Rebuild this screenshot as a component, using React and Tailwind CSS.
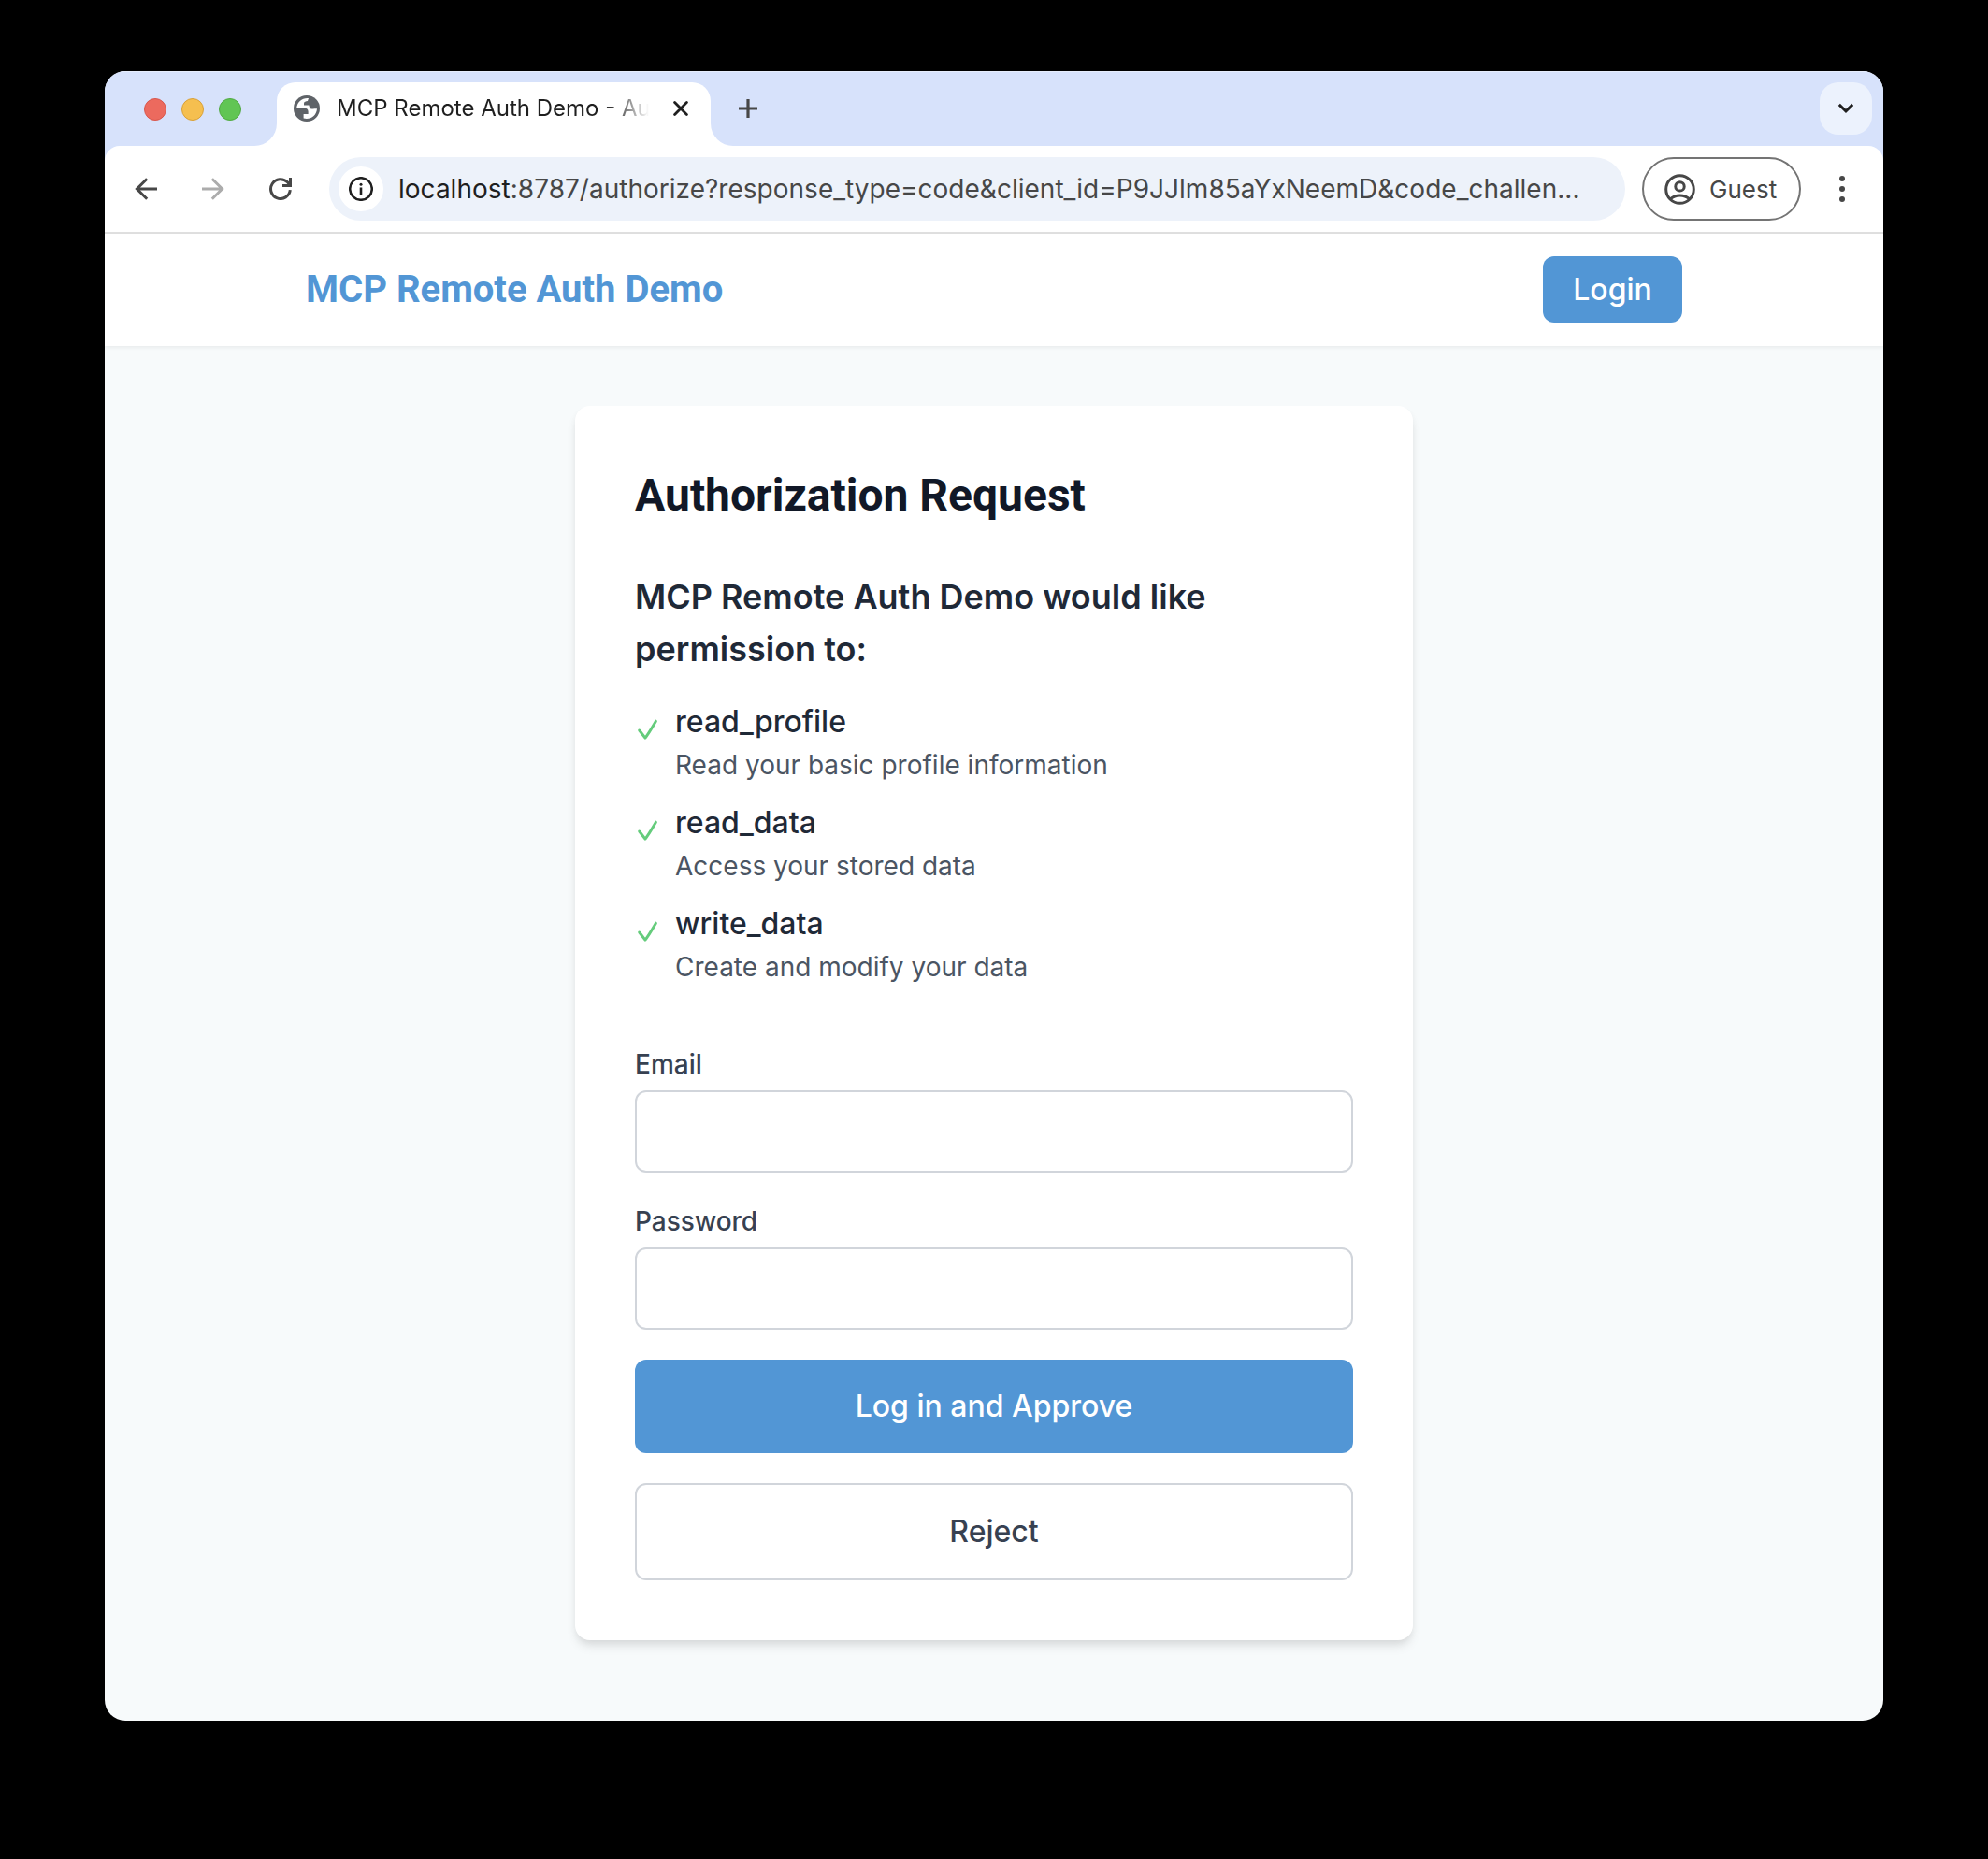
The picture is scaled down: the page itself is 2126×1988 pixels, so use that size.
import React from "react";

const permissions = [
  { name: "read_profile", description: "Read your basic profile information" },
  { name: "read_data", description: "Access your stored data" },
  { name: "write_data", description: "Create and modify your data" },
];

function GlobeIcon() {
  return (
    <svg className="size-7 shrink-0" viewBox="0 0 28 28">
      <circle cx="14" cy="14" r="14" fill="#5f6368" />
      <path
        d="M16 3C9 2.4 3.8 7 3.2 13.6H11C14 13.6 15.6 15 15.6 17.6V20H10.6V24.6C18 26.6 24.6 21.6 25 14.3H22C18.4 15.4 16.8 13.4 16.4 10.4H11V8.4C11.2 6.4 13 6.6 15 6Z"
        fill="#fff"
      />
    </svg>
  );
}

function CheckIcon() {
  return (
    <svg
      className="size-6 shrink-0"
      viewBox="0 0 24 24"
      fill="none"
      stroke="#65cc7c"
      strokeWidth="3"
      strokeLinecap="round"
      strokeLinejoin="round"
    >
      <path d="M2.7 13L9 21.1C13.2 15.7 16.2 10.2 20.4 3.2" />
    </svg>
  );
}

function TabStrip() {
  return (
    <div className="flex h-20 items-end bg-[#d7e2fb] shadow-[inset_0_1px_0_#e6edfc]">
      <div className="flex h-20 w-40 items-center gap-4 pt-0.5 pl-[42px]">
        <span className="size-6 rounded-full border border-[#d8574c] bg-[#ec6a5e]" />
        <span className="size-6 rounded-full border border-[#d8a13a] bg-[#f5bf4f]" />
        <span className="size-6 rounded-full border border-[#52a943] bg-[#61c554]" />
      </div>
      <div className="size-6 bg-white">
        <div className="size-6 rounded-br-[24px] bg-[#d7e2fb]" />
      </div>
      <div className="flex h-[68px] w-[464px] items-center rounded-t-[20px] bg-white pb-3 pl-[18px]">
        <GlobeIcon />
        <span className="ml-[18px] w-[350px] [mask-image:linear-gradient(to_right,#000_292px,transparent_334px)] text-2xl whitespace-nowrap text-[#1f1f1f]">
          MCP Remote Auth Demo - Aut
        </span>
        <svg
          className="ml-[10px] size-4 shrink-0"
          viewBox="0 0 16 16"
          stroke="#1f1f1f"
          strokeWidth="2.8"
          strokeLinecap="round"
        >
          <path d="M1.6 1.6L14.4 14.4M14.4 1.6L1.6 14.4" />
        </svg>
      </div>
      <div className="size-6 bg-white">
        <div className="size-6 rounded-bl-[24px] bg-[#d7e2fb]" />
      </div>
      <div className="flex h-20 flex-1 items-center justify-between pr-3 pl-1.5">
        <svg className="size-5" viewBox="0 0 20 20" stroke="#474747" strokeWidth="3.2">
          <path d="M0 10H20M10 0V20" />
        </svg>
        <div className="flex size-14 items-center justify-center rounded-[20px] bg-[#ecf2fd]">
          <svg className="size-5" viewBox="0 0 20 20" fill="none" stroke="#1f1f1f" strokeWidth="3">
            <path d="M2.8 5.8L10 12.8L17.2 5.8" />
          </svg>
        </div>
      </div>
    </div>
  );
}

function Toolbar() {
  return (
    <div className="bg-[#d7e2fb]">
      <div className="flex h-[94px] items-center rounded-t-[16px] border-b-2 border-[#dfdfdf] bg-white">
        <svg className="ml-8 size-6" viewBox="0 0 24 24" fill="none" stroke="#474747" strokeWidth="3">
          <path d="M24 12H2.5M13.2 1.2L2.4 12L13.2 22.8" />
        </svg>
        <svg className="ml-12 size-6" viewBox="0 0 24 24" fill="none" stroke="#acacac" strokeWidth="3">
          <path d="M0 12H21.5M10.8 1.2L21.6 12L10.8 22.8" />
        </svg>
        <svg className="ml-12 size-6" viewBox="0 0 24 24" fill="none" stroke="#474747" strokeWidth="3">
          <path d="M22.3 13.2A10.4 10.4 0 1 1 19.4 4.8L22.6 8.4M22.5 0V8.5H14" />
        </svg>
        <div className="ml-10 flex h-[68px] w-[1386px] items-center rounded-full bg-[#edf2fa] pl-2.5">
          <div className="flex size-12 items-center justify-center rounded-full bg-white">
            <svg className="size-[26px]" viewBox="0 0 26 26" fill="none" stroke="#1f1f1f">
              <circle cx="13" cy="13" r="11.8" strokeWidth="2.5" />
              <path d="M13 11.4V19.2" strokeWidth="2.6" />
              <circle cx="13" cy="8.2" r="1.5" fill="#1f1f1f" stroke="none" />
            </svg>
          </div>
          <span className="ml-4 text-[28px] leading-10 tracking-[0.015px] whitespace-nowrap text-[#474747]">
            <span className="text-[#1f1f1f]">localhost</span>
            :8787/authorize?response_type=code&amp;client_id=P9JJlm85aYxNeemD&amp;code_challen...
          </span>
        </div>
        <div className="ml-[18px] flex h-[68px] w-[170px] items-center rounded-full border-2 border-[#747474] pl-[21.5px] text-[#474747]">
          <svg className="size-[33px]" viewBox="0 0 33 33" fill="none" stroke="currentColor" strokeWidth="3">
            <circle cx="16.5" cy="16.5" r="14.8" />
            <circle cx="16.5" cy="13.4" r="4.7" />
            <path d="M6.2 26.8C12 21.6 21 21.6 26.8 26.8" />
          </svg>
          <span className="ml-[15.5px] text-[26px]">Guest</span>
        </div>
        <svg className="ml-[41px] h-7 w-1.5" viewBox="0 0 6 28" fill="#474747">
          <circle cx="3" cy="3" r="3" />
          <circle cx="3" cy="14" r="3" />
          <circle cx="3" cy="25" r="3" />
        </svg>
      </div>
    </div>
  );
}

function Field({ label, type }) {
  return (
    <label className="block">
      <span className="mb-2 block text-[28px] leading-10 font-medium text-[#374151]">{label}</span>
      <input type={type} className="block h-[88px] w-full rounded-xl border-2 border-[#d1d5db] px-6" />
    </label>
  );
}

export default function App() {
  return (
    <div className="h-[1988px] bg-black px-28 pt-[76px] font-['Inter',sans-serif]">
      <div className="flex h-[1764px] w-[1902px] flex-col overflow-hidden rounded-[22px] bg-[#f7fafb]">
        <TabStrip />
        <Toolbar />
        <header className="relative h-[120px] bg-white px-[215px] pt-6 shadow-[0_2px_4px_rgba(0,0,0,0.06)]">
          <div className="flex w-[1472px] items-start justify-between">
            <span className="mt-2 font-['Roboto'] text-[40px] leading-14 font-bold text-[#5296d5]">
              MCP Remote Auth Demo
            </span>
            <button className="h-[71px] w-[149px] rounded-xl bg-[#5296d5] text-[32px] font-medium text-white">
              Login
            </button>
          </div>
        </header>
        <main className="flex justify-center pt-16">
          <section className="h-[1320px] w-[896px] rounded-2xl bg-white p-16 shadow-[0_8px_12px_-2px_rgba(0,0,0,0.1),0_4px_8px_-2px_rgba(0,0,0,0.06)]">
            <h1 className="mb-12 font-['Roboto'] text-5xl leading-[64px] font-bold text-[#111827]">
              Authorization Request
            </h1>
            <h2 className="mb-[26px] text-4xl leading-14 font-semibold text-[#1f2937]">
              MCP Remote Auth Demo would like permission to:
            </h2>
            <ul className="mb-[62px] flex flex-col gap-4">
              {permissions.map((item) => (
                <li key={item.name} className="flex h-[92px] items-start">
                  <span className="mt-[19.5px] mr-[17px] ml-0.5">
                    <CheckIcon />
                  </span>
                  <div>
                    <p className="text-[32px] leading-[48px] font-medium text-[#1f2937]">{item.name}</p>
                    <p className="mt-0.5 text-[28px] leading-10 text-[#4b5563]">{item.description}</p>
                  </div>
                </li>
              ))}
            </ul>
            <form className="flex flex-col gap-8">
              <Field label="Email" type="email" />
              <Field label="Password" type="password" />
              <button type="button" className="h-[100px] rounded-xl bg-[#5296d5] text-[32px] font-medium text-white">
                Log in and Approve
              </button>
              <button
                type="button"
                className="h-[104px] rounded-xl border-2 border-[#d1d5db] bg-white text-[32px] font-medium text-[#374151]"
              >
                Reject
              </button>
            </form>
          </section>
        </main>
      </div>
    </div>
  );
}
